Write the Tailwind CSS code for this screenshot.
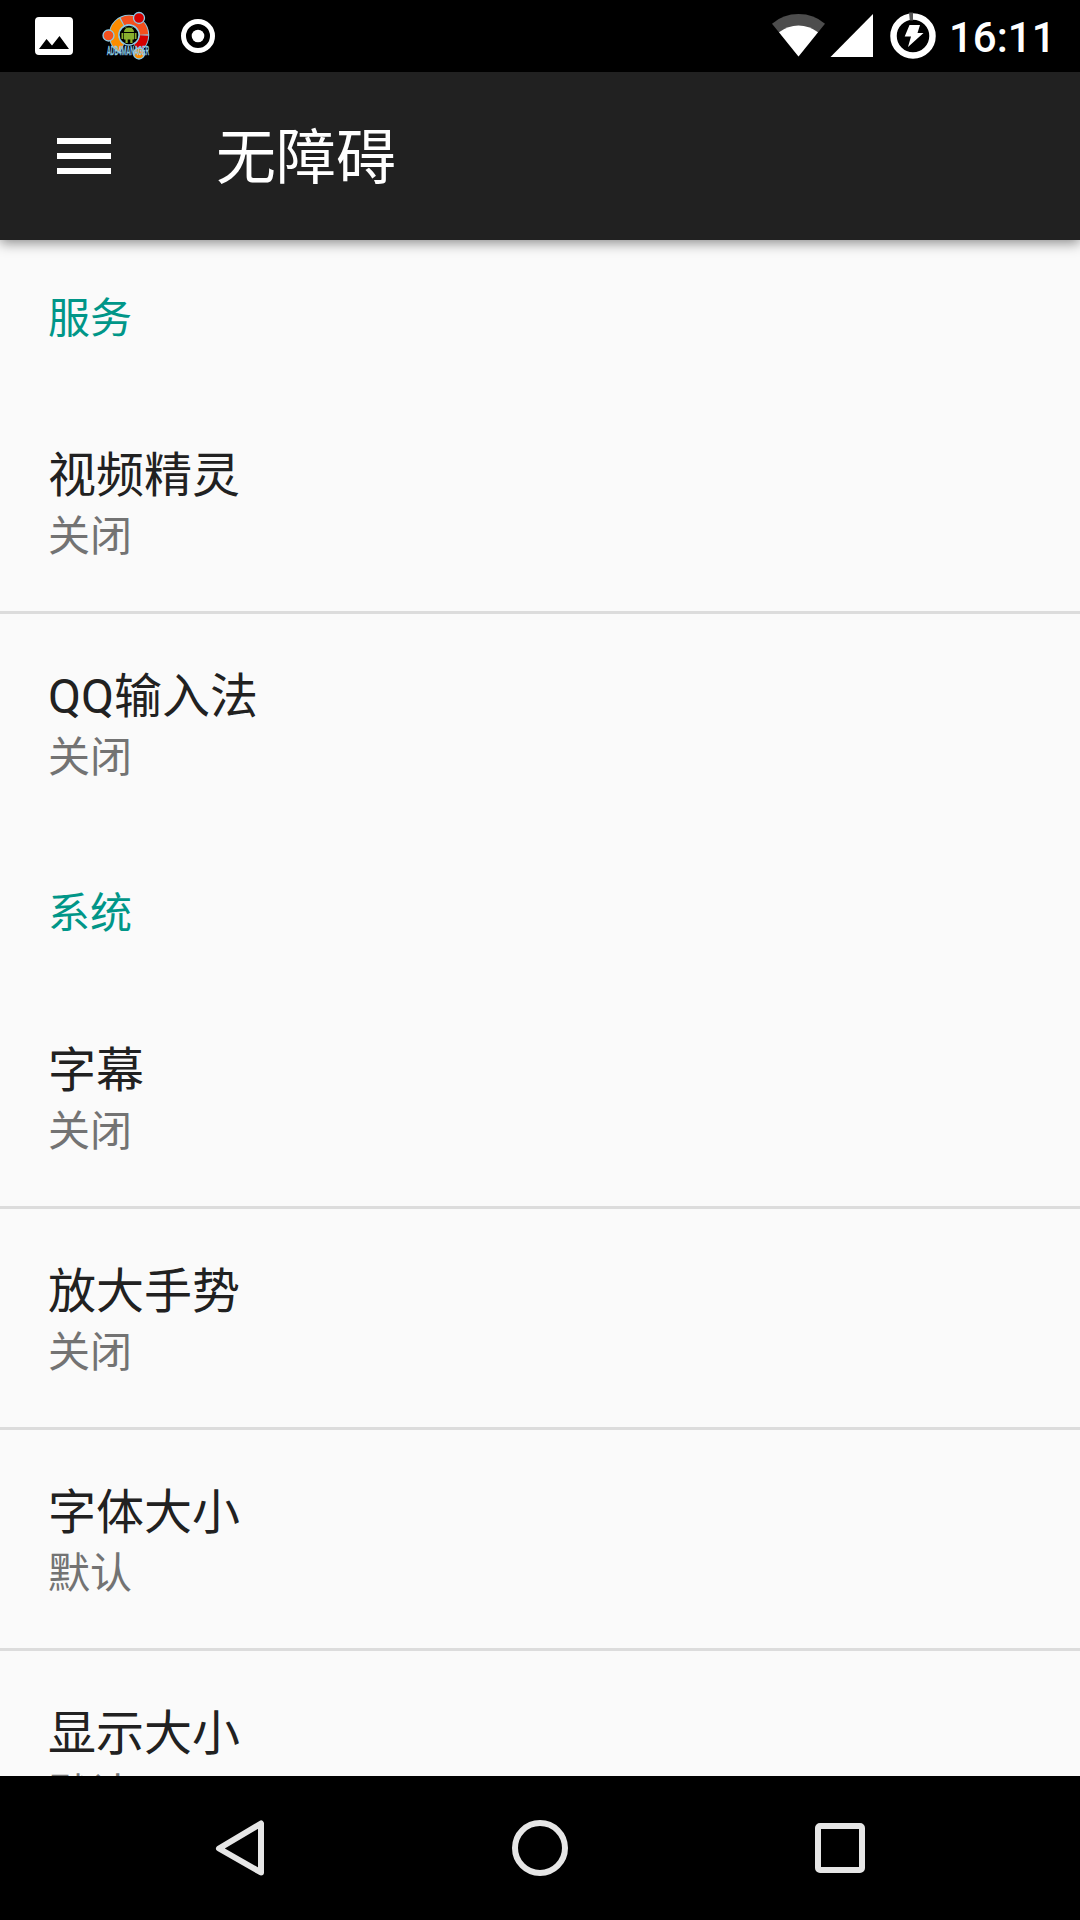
<!DOCTYPE html>
<html lang="zh-CN">
<head>
    <meta charset="UTF-8">
    <meta name="viewport" content="width=device-width, initial-scale=1.0">
    <title>无障碍</title>
    <script src="https://cdn.jsdelivr.net/npm/@tailwindcss/browser@4"></script>
</head>
<body class="bg-black">
    <div class="flex flex-col w-[1080px] h-[1920px] overflow-hidden bg-[#fafafa] font-['Roboto','Noto_Sans_CJK_SC',sans-serif] text-[#212121]">

        <!-- Status bar -->
        <div class="flex items-center justify-between h-[72px] shrink-0 bg-black text-white">
            <svg class="w-[240px] h-[72px]" viewBox="0 0 240 72">
                <path fill="#fff" fill-rule="evenodd" d="M39 17h30a4 4 0 0 1 4 4v30a4 4 0 0 1-4 4H39a4 4 0 0 1-4-4V21a4 4 0 0 1 4-4zM39 49h30L59.500 36l-7.500 9.500L46.500 39z"/>
                <!-- ADB manager logo -->
                <g fill="none" stroke-width="8.500">
                    <circle cx="129" cy="35" r="15" stroke="#8ccbe8" stroke-width="10.500"/>
                    <path stroke="#fb8c00" d="M121.500 48A15 15 0 0 1 121.500 22"/>
                    <path stroke="#f4511e" d="M122.500 21.500A15 15 0 0 1 144 34.500"/>
                    <path stroke="#d50000" d="M144 35.500A15 15 0 0 1 136.500 48"/>
                    <path stroke="#000" stroke-width="11" d="M136 48.300A15 15 0 0 1 122 48.300"/>
                </g>
                <g stroke="#8ccbe8" stroke-width="1.300">
                    <circle cx="139" cy="18" r="5.500" fill="#d50000"/>
                    <circle cx="108.500" cy="35.500" r="5.500" fill="#f4511e"/>
                    <circle cx="139" cy="53.500" r="5.500" fill="#fb8c00"/>
                    <circle cx="129" cy="35" r="10" fill="#000"/>
                </g>
                <g fill="#8ab02e">
                    <path d="M124 32a5 4.500 0 0 1 10 0zM124 33h10v6.500h-1.500V43h-2.200v-3.500h-2.600V43h-2.200v-3.500H124zM121.500 33h1.800v6h-1.800zM134.700 33h1.800v6h-1.800z"/>
                    <path stroke="#8ab02e" stroke-width=".8" d="M125.500 27l1.500 2M132.500 27l-1.500 2"/>
                </g>
                <text x="107" y="55" textLength="42" lengthAdjust="spacingAndGlyphs" font-family="Roboto" font-size="13" font-weight="500" fill="#8ccbe8" stroke="#8ccbe8" stroke-width=".3">ADB4MANAGER</text>
                <circle cx="198" cy="36" r="14.500" fill="none" stroke="#fff" stroke-width="5"/>
                <circle cx="198" cy="36" r="6.300" fill="#fff"/>
            </svg>
            <div class="flex items-center h-full">
                <svg class="w-[180px] h-[72px]" viewBox="760 0 180 72">
                    <path fill="#4d4d4d" d="M798.500 56.500L772 23.700Q783 14 798.500 14T825 23.700z"/>
                    <path fill="#fff" d="M798.500 56.500L779 32.200Q788 25.500 798.500 25.500T818 32.200z"/>
                    <path fill="#fff" d="M873 14v43h-42.500z"/>
                    <circle cx="913" cy="36" r="19.500" fill="none" stroke="#fff" stroke-width="6.500"/>
                    <path fill="#555" d="M909 12.500h4v8h-3.200z"/>
                    <path fill="#fff" d="M909.500 25h10.500l-2.500 8h6L908 47l3-10.500h-6.300z"/>
                </svg>
                <span class="w-[140px] pl-[9px] pt-[4px] text-[42px] leading-[48px] font-medium">16:11</span>
            </div>
        </div>

        <!-- Toolbar -->
        <header class="relative z-10 flex items-center h-[168px] shrink-0 pl-[57px] bg-[#212121] text-white shadow-[0_3px_12px_rgba(0,0,0,0.45)]">
            <svg class="w-[54px] h-[36px]" viewBox="0 0 54 36" fill="#fff">
                <path d="M0 0h54v6H0zM0 15h54v6H0zM0 30h54v6H0z"/>
            </svg>
            <h1 class="ml-[105px] pt-[6px] text-[60px] leading-[72px]">无障碍</h1>
        </header>

        <!-- Preference list -->
        <main class="flex-1 min-h-0 overflow-hidden">
            <h2 class="h-[153px] pt-[49px] pl-12 text-[42px] leading-[60px] text-[#009688]">服务</h2>
            <div class="h-[221px] pt-[50px] pl-12 border-b-3 border-[#dcdcdc]">
                <div class="text-[48px] leading-[66px]">视频精灵</div>
                <div class="text-[42px] leading-[56px] text-[#737373]">关闭</div>
            </div>
            <div class="h-[218px] pt-[50px] pl-12">
                <div class="text-[48px] leading-[66px]">QQ输入法</div>
                <div class="text-[42px] leading-[56px] text-[#737373]">关闭</div>
            </div>

            <h2 class="h-[156px] pt-[52px] pl-12 text-[42px] leading-[60px] text-[#009688]">系统</h2>
            <div class="h-[221px] pt-[50px] pl-12 border-b-3 border-[#dcdcdc]">
                <div class="text-[48px] leading-[66px]">字幕</div>
                <div class="text-[42px] leading-[56px] text-[#737373]">关闭</div>
            </div>
            <div class="h-[221px] pt-[50px] pl-12 border-b-3 border-[#dcdcdc]">
                <div class="text-[48px] leading-[66px]">放大手势</div>
                <div class="text-[42px] leading-[56px] text-[#737373]">关闭</div>
            </div>
            <div class="h-[221px] pt-[50px] pl-12 border-b-3 border-[#dcdcdc]">
                <div class="text-[48px] leading-[66px]">字体大小</div>
                <div class="text-[42px] leading-[56px] text-[#737373]">默认</div>
            </div>
            <div class="h-[221px] pt-[50px] pl-12">
                <div class="text-[48px] leading-[66px]">显示大小</div>
                <div class="text-[42px] leading-[56px] text-[#737373]">默认</div>
            </div>
        </main>

        <!-- Navigation bar -->
        <nav class="flex items-center justify-center gap-[156px] h-[144px] shrink-0 bg-black">
            <svg class="w-[144px] h-[144px]" viewBox="0 0 144 144" fill="none" stroke="#e6e6e6" stroke-width="6" stroke-linejoin="round">
                <path d="M93 47.500v49L51 72.500z"/>
            </svg>
            <svg class="w-[144px] h-[144px]" viewBox="0 0 144 144" fill="none" stroke="#e6e6e6" stroke-width="6">
                <circle cx="72" cy="72" r="25"/>
            </svg>
            <svg class="w-[144px] h-[144px]" viewBox="0 0 144 144" fill="none" stroke="#e6e6e6" stroke-width="6">
                <rect x="50" y="50" width="44" height="44" rx="2"/>
            </svg>
        </nav>
    </div>
</body>
</html>
